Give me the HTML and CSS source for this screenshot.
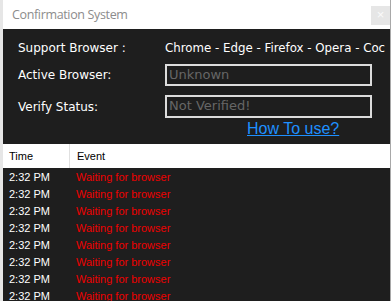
FILE: index.html
```html
<!DOCTYPE html>
<html lang="en">
<head>
    <meta charset="UTF-8">
    <meta name="viewport" content="width=device-width, initial-scale=1.0">
    <title>Confirmation System</title>
    <link rel="stylesheet" href="styles.css">
</head>
<body>
    <div class="window">
        <div class="titlebar">
            <span class="title">Confirmation System</span>
            <span class="close">&times;</span>
        </div>

        <!-- Browser info -->
        <div class="panel">
            <div class="field field-support">
                <span class="label">Support Browser :</span>
                <span class="value">Chrome - Edge - Firefox - Opera - Coc</span>
            </div>
            <div class="field field-active">
                <span class="label">Active Browser:</span>
                <div class="box">Unknown</div>
            </div>
            <div class="field field-verify">
                <span class="label">Verify Status:</span>
                <div class="box">Not Verified!</div>
            </div>
            <div class="field field-link">
                <a href="#" class="help">How To use?</a>
            </div>
        </div>

        <!-- Log list -->
        <div class="log">
            <div class="log-head">
                <div class="col-time">Time</div>
                <div class="col-event">Event</div>
            </div>
            <div class="log-row"><div class="col-time">2:32 PM</div><div class="col-event">Waiting for browser</div></div>
            <div class="log-row"><div class="col-time">2:32 PM</div><div class="col-event">Waiting for browser</div></div>
            <div class="log-row"><div class="col-time">2:32 PM</div><div class="col-event">Waiting for browser</div></div>
            <div class="log-row"><div class="col-time">2:32 PM</div><div class="col-event">Waiting for browser</div></div>
            <div class="log-row"><div class="col-time">2:32 PM</div><div class="col-event">Waiting for browser</div></div>
            <div class="log-row"><div class="col-time">2:32 PM</div><div class="col-event">Waiting for browser</div></div>
            <div class="log-row"><div class="col-time">2:32 PM</div><div class="col-event">Waiting for browser</div></div>
            <div class="log-row"><div class="col-time">2:32 PM</div><div class="col-event">Waiting for browser</div></div>
        </div>
    </div>
</body>
</html>
```

FILE: styles.css
```css
body {
    margin: 0;
    padding: 0;
    background: #e6e6e6;
    font-family: "Liberation Sans", Arial, sans-serif;
}

.window {
    margin-left: 3px;
    width: 387px;
    height: 301px;
    background: #1e1e1e;
    border-right: 1px solid #a8a8a8;
    overflow: hidden;
}

.titlebar {
    height: 29px;
    background: white;
    display: flex;
    align-items: center;
    justify-content: space-between;
}

.title {
    margin-left: 9px;
    font-family: "Open Sans", sans-serif;
    font-size: 12.5px;
    letter-spacing: -0.35px;
    color: #8c8c8c;
}

.close {
    width: 19px;
    height: 19px;
    margin-top: 2px;
    background: #e6e6e6;
    color: #fafafa;
    font-size: 13px;
    line-height: 18px;
    text-align: center;
}

.panel {
    height: 115px;
    padding: 10px 0 0 15px;
    box-sizing: border-box;
    font-family: "DejaVu Sans", sans-serif;
    font-size: 12px;
    color: white;
}

.field {
    display: flex;
    align-items: center;
}

.label {
    width: 147px;
    flex-shrink: 0;
}

.value {
    white-space: nowrap;
    font-size: 11.8px;
}

.field-support {
    height: 18px;
}

.field-active {
    margin-top: 7px;
    height: 22px;
}

.field-verify {
    margin-top: 9px;
    height: 23px;
}

.box {
    width: 207px;
    height: 100%;
    box-sizing: border-box;
    border: 2px solid #dcdcdc;
    padding-left: 2px;
    color: #666;
    font-size: 13px;
    line-height: 18px;
}

.field-link {
    height: 22px;
    padding-left: 229px;
}

.help {
    font-family: "Liberation Sans", sans-serif;
    font-size: 16px;
    color: #1e90ff;
}

.log {
    font-size: 11px;
}

.log-head {
    height: 24px;
    background: white;
    color: black;
    display: flex;
    align-items: center;
}

.log-head .col-time {
    border-right: 1px solid #e0e0e0;
    height: 100%;
    display: flex;
    align-items: center;
}

.log-row {
    height: 17px;
    display: flex;
    align-items: center;
}

.col-time {
    width: 60px;
    padding-left: 6px;
    color: white;
}

.log-head .col-time {
    color: black;
}

.col-event {
    padding-left: 7px;
    color: #ee0000;
}

.log-head .col-event {
    color: black;
}
```
